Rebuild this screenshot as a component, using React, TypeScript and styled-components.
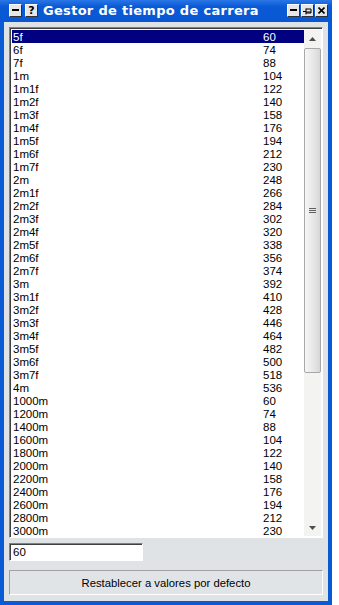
import * as React from 'react';
import styled, { createGlobalStyle } from 'styled-components';

const GlobalStyle = createGlobalStyle`
  html, body {
    margin: 0;
    padding: 0;
    background: #ffffff;
  }
  body {
    font-family: Tahoma, "DejaVu Sans", "Liberation Sans", sans-serif;
  }
`;

// Distance names and their default times
const rows: [string, number][] = [
  ['5f', 60], ['6f', 74], ['7f', 88],
  ['1m', 104], ['1m1f', 122], ['1m2f', 140], ['1m3f', 158], ['1m4f', 176], ['1m5f', 194], ['1m6f', 212], ['1m7f', 230],
  ['2m', 248], ['2m1f', 266], ['2m2f', 284], ['2m3f', 302], ['2m4f', 320], ['2m5f', 338], ['2m6f', 356], ['2m7f', 374],
  ['3m', 392], ['3m1f', 410], ['3m2f', 428], ['3m3f', 446], ['3m4f', 464], ['3m5f', 482], ['3m6f', 500], ['3m7f', 518],
  ['4m', 536],
  ['1000m', 60], ['1200m', 74], ['1400m', 88], ['1600m', 104], ['1800m', 122], ['2000m', 140],
  ['2200m', 158], ['2400m', 176], ['2600m', 194], ['2800m', 212], ['3000m', 230],
];

const Window = styled.div`
  width: 332px;
  height: 605px;
  box-sizing: border-box;
  background: #0a5ad6;
  padding: 0 4px 4px 4px;
  display: flex;
  flex-direction: column;
`;

const TitleBar = styled.div`
  height: 23px;
  display: flex;
  align-items: center;
  background: linear-gradient(to bottom, #2a76e6 0%, #0a5ad6 30%, #0856d2 100%);
  margin: 0 -4px;
  padding: 0 4px 1px 9px;
  gap: 1px;
`;

const TitleButton = styled.div<{ $gapRight?: boolean }>`
  width: 13px;
  height: 13px;
  box-sizing: border-box;
  background: #e6e6e6;
  border: 1px solid #ffffff;
  border-right-color: #303030;
  border-bottom-color: #303030;
  display: flex;
  align-items: center;
  justify-content: center;
  margin-right: ${p => (p.$gapRight ? '2px' : '0')};
  font: bold 11px "DejaVu Sans", sans-serif;
  color: #000;
  line-height: 1;
`;

const Title = styled.div`
  flex: 1;
  color: #ffffff;
  font: bold 13px "DejaVu Sans", "Liberation Sans", sans-serif;
  letter-spacing: 0.3px;
  margin-left: 4px;
  white-space: nowrap;
`;

const Body = styled.div`
  flex: 1;
  background: #dfe3e6;
  padding: 5px 5px 6px 5px;
  display: flex;
  flex-direction: column;
`;

const List = styled.div`
  height: 511px;
  box-sizing: border-box;
  background: #ffffff;
  border: 1px solid;
  border-color: #808080 #ffffff #ffffff #808080;
  box-shadow: inset 1px 1px 0 #404040;
  padding: 2px 2px 1px 2px;
  display: flex;
`;

const Rows = styled.div`
  flex: 1;
  overflow: hidden;
`;

const Row = styled.div<{ $selected?: boolean }>`
  height: 13px;
  display: flex;
  align-items: center;
  font: 11.5px "Liberation Sans", Arial, sans-serif;
  color: ${p => (p.$selected ? '#ffffff' : '#000000')};
  background: ${p => (p.$selected ? '#000080' : 'transparent')};
  padding-left: 1px;
`;

const Name = styled.span`
  width: 250px;
`;

const Scrollbar = styled.div`
  width: 17px;
  background: #f3f3f1;
  display: flex;
  flex-direction: column;
  margin-right: -1px;
`;

const ArrowButton = styled.div`
  height: 17px;
  display: flex;
  align-items: center;
  justify-content: center;
  background: #f3f3f1;
`;

const Thumb = styled.div`
  height: 325px;
  margin: 1px 0 0 0;
  box-sizing: border-box;
  border: 1px solid #a8a8a8;
  border-radius: 2px;
  background: linear-gradient(to right, #f6f6f6, #e6e6e6 60%, #d6d6d6);
  display: flex;
  align-items: center;
  justify-content: center;
`;

const Track = styled.div`
  flex: 1;
`;

const Input = styled.div`
  margin-top: 5px;
  width: 134px;
  height: 18px;
  box-sizing: border-box;
  background: #ffffff;
  border: 1px solid;
  border-color: #808080 #ffffff #ffffff #808080;
  box-shadow: inset 1px 1px 0 #404040;
  font: 11.5px "Liberation Sans", Arial, sans-serif;
  padding: 2px 0 0 3px;
`;

const ResetButton = styled.div`
  margin-top: 9px;
  height: 25px;
  box-sizing: border-box;
  border: 1px solid;
  border-color: #a0a0a0 #ffffff #ffffff #a0a0a0;
  background: #e1e4e7;
  display: flex;
  align-items: center;
  justify-content: center;
  font: 11.3px "Liberation Sans", Arial, sans-serif;
  color: #000;
`;

const Up = () => (
  <svg width="7" height="4" viewBox="0 0 7 4"><path d="M3.5 0 L7 4 L0 4 Z" fill="#4d4d4d" /></svg>
);
const Down = () => (
  <svg width="7" height="4" viewBox="0 0 7 4"><path d="M0 0 L7 0 L3.5 4 Z" fill="#4d4d4d" /></svg>
);
const Grip = () => (
  <svg width="7" height="7" viewBox="0 0 7 7">
    <path d="M0 1.5 H7 M0 3.5 H7 M0 5.5 H7" stroke="#606060" strokeWidth="1" />
  </svg>
);
const PinIcon = () => (
  <svg width="9" height="8" viewBox="0 0 9 8">
    <path d="M0 4.5 H3 M3 1.5 V7.5 M3 2 H8 V6 H3 M3 5 H8" stroke="#000" strokeWidth="1" fill="none" />
  </svg>
);
const CloseIcon = () => (
  <svg width="7" height="7" viewBox="0 0 7 7">
    <path d="M0.5 0.5 L6.5 6.5 M6.5 0.5 L0.5 6.5" stroke="#000" strokeWidth="1.6" />
  </svg>
);
const MinIcon = () => (
  <svg width="7" height="3" viewBox="0 0 7 3"><rect x="0" y="0" width="7" height="2" fill="#000" /></svg>
);

export default function App() {
  return (
    <>
      <GlobalStyle />
      <Window>
        <TitleBar>
          <TitleButton $gapRight><MinIcon /></TitleButton>
          <TitleButton>?</TitleButton>
          <Title>Gestor de tiempo de carrera</Title>
          <TitleButton><MinIcon /></TitleButton>
          <TitleButton><PinIcon /></TitleButton>
          <TitleButton><CloseIcon /></TitleButton>
        </TitleBar>
        <Body>
          <List>
            <Rows>
              {rows.map(([name, value], i) => (
                <Row key={name} $selected={i === 0}>
                  <Name>{name}</Name>
                  <span>{value}</span>
                </Row>
              ))}
            </Rows>
            <Scrollbar>
              <ArrowButton><Up /></ArrowButton>
              <Thumb><Grip /></Thumb>
              <Track />
              <ArrowButton><Down /></ArrowButton>
            </Scrollbar>
          </List>
          <Input>60</Input>
          <ResetButton>Restablecer a valores por defecto</ResetButton>
        </Body>
      </Window>
    </>
  );
}
